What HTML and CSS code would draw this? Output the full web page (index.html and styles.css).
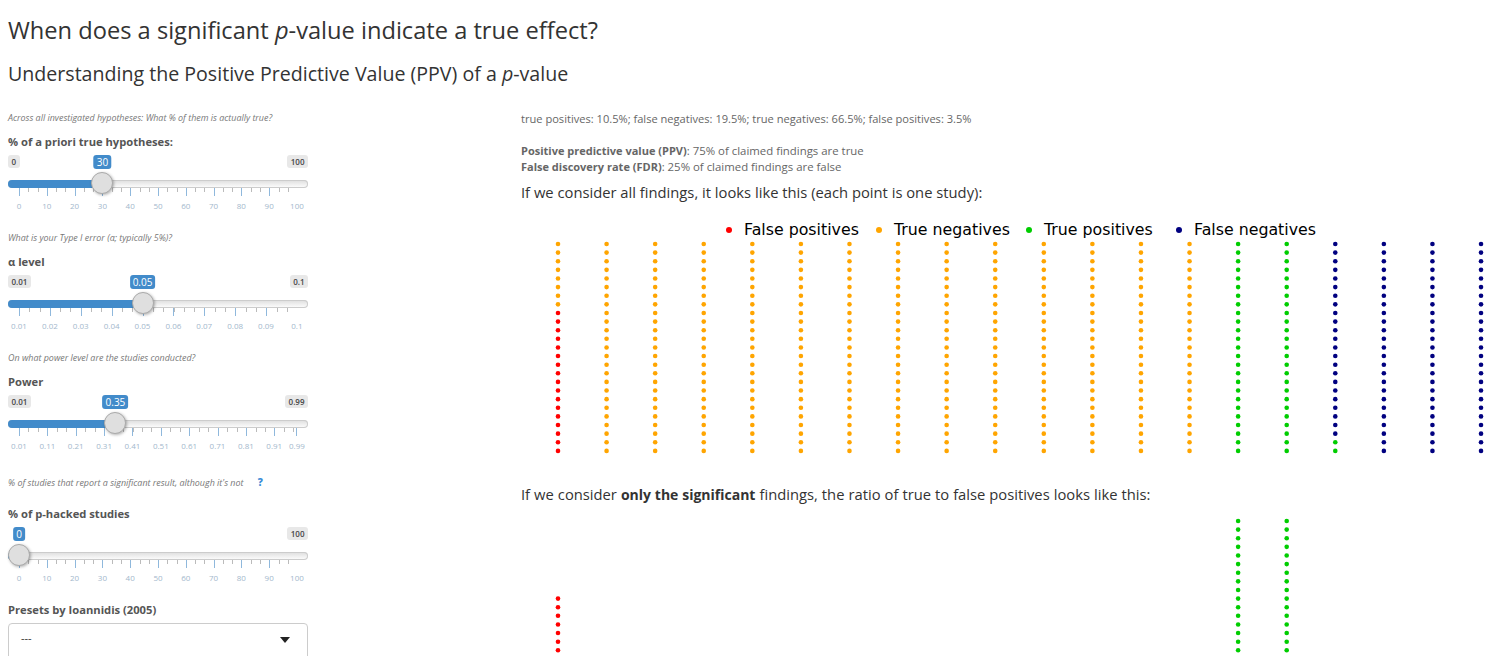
FILE: index.html
```html
<!DOCTYPE html>
<html>
	<head>
		<meta charset="UTF-8">
		<title>When does a significant p-value indicate a true effect?</title>
		<link rel="stylesheet" href="styles.css">
	</head>
	<body>
		<h2 class="title">When does a significant <em>p</em>-value indicate a true effect?</h2>
		<h3 class="subtitle">Understanding the Positive Predictive Value (PPV) of a <em>p</em>-value</h3>

		<div class="layout">
			<div class="sidebar">
				<p class="hint">Across all investigated hypotheses: What % of them is actually true?</p>
				<div class="field">
					<label>% of a priori true hypotheses:</label>
					<div class="slider" style="--v: .3">
						<div class="bubbles"><span class="bubble">0</span><span class="bubble">100</span><span class="bubble-value">30</span></div>
						<div class="track"><div class="fill"></div><div class="handle"></div></div>
						<div class="ticks ticks-pct"></div>
						<div class="grid"><span>0</span><span>10</span><span>20</span><span>30</span><span>40</span><span>50</span><span>60</span><span>70</span><span>80</span><span>90</span><span>100</span></div>
					</div>
				</div>

				<p class="hint">What is your Type I error (α; typically 5%)?</p>
				<div class="field">
					<label>α level</label>
					<div class="slider" style="--v: .4444">
						<div class="bubbles"><span class="bubble">0.01</span><span class="bubble">0.1</span><span class="bubble-value">0.05</span></div>
						<div class="track"><div class="fill"></div><div class="handle"></div></div>
						<div class="ticks ticks-alpha"></div>
						<div class="grid"><span>0.01</span><span>0.02</span><span>0.03</span><span>0.04</span><span>0.05</span><span>0.06</span><span>0.07</span><span>0.08</span><span>0.09</span><span>0.1</span></div>
					</div>
				</div>

				<p class="hint">On what power level are the studies conducted?</p>
				<div class="field">
					<label>Power</label>
					<div class="slider" style="--v: .3469">
						<div class="bubbles"><span class="bubble">0.01</span><span class="bubble">0.99</span><span class="bubble-value">0.35</span></div>
						<div class="track"><div class="fill"></div><div class="handle"></div></div>
						<div class="ticks ticks-power"></div>
						<div class="grid grid-power"><span>0.01</span><span>0.11</span><span>0.21</span><span>0.31</span><span>0.41</span><span>0.51</span><span>0.61</span><span>0.71</span><span>0.81</span><span>0.91</span><span>0.99</span></div>
					</div>
				</div>

				<p class="hint hint-help">% of studies that report a significant result, although it's not <span class="help">?</span></p>
				<div class="field field-hacked">
					<label>% of p-hacked studies</label>
					<div class="slider" style="--v: 0">
						<div class="bubbles"><span class="bubble bubble-hidden">0</span><span class="bubble">100</span><span class="bubble-value">0</span></div>
						<div class="track"><div class="fill"></div><div class="handle"></div></div>
						<div class="ticks ticks-pct"></div>
						<div class="grid"><span>0</span><span>10</span><span>20</span><span>30</span><span>40</span><span>50</span><span>60</span><span>70</span><span>80</span><span>90</span><span>100</span></div>
					</div>
				</div>

				<div class="field field-select">
					<label>Presets by Ioannidis (2005)</label>
					<div class="select"><span>---</span><i class="caret"></i></div>
				</div>
			</div>

			<div class="main">
				<p class="rates">true positives: 10.5%; false negatives: 19.5%; true negatives: 66.5%; false positives: 3.5%</p>
				<p class="summary"><b>Positive predictive value (PPV)</b>: 75% of claimed findings are true<br><b>False discovery rate (FDR)</b>: 25% of claimed findings are false</p>
				<p class="lead">If we consider all findings, it looks like this (each point is one study):</p>
				<ul class="legend">
					<li><i class="dot dot-fp"></i>False positives</li>
					<li><i class="dot dot-tn"></i>True negatives</li>
					<li><i class="dot dot-tp"></i>True positives</li>
					<li><i class="dot dot-fn"></i>False negatives</li>
				</ul>
				<svg id="plot-all" class="plot" width="977" height="218"></svg>
				<p class="lead lead-second">If we consider <b>only the significant</b> findings, the ratio of true to false positives looks like this:</p>
				<svg id="plot-sig" class="plot plot-sig" width="977" height="218"></svg>
			</div>
		</div>

		<script src="plot.js"></script>
	</body>
</html>
```

FILE: styles.css
```css
*{
	box-sizing: border-box;
}
html,body{
	height: 100%;
	overflow: hidden;
}
body{
	margin: 0;
	padding: 0 8px;
	font-family: "Open Sans", "Liberation Sans", sans-serif;
	font-size: 14px;
	color: #333;
	background: #fff;
}
.title{
	margin: 0;
	padding-top: 14px;
	font-size: 23.65px;
	line-height: 32px;
	font-weight: 400;
}
.subtitle{
	margin: 0;
	padding-top: 14px;
	font-size: 19.6px;
	line-height: 28px;
	font-weight: 400;
}
.layout{
	display: flex;
	margin-top: 23px;
}
.sidebar{
	width: 300px;
	flex: none;
	color: #555;
}
.main{
	margin-left: 213px;
	padding-top: 1px;
	width: 977px;
	flex: none;
}

/* left column */
.hint{
	margin: 0;
	height: 14px;
	font-size: 8.94px;
	line-height: 14px;
	font-style: italic;
	color: #777;
	white-space: nowrap;
}
.hint-help{
	margin-top: 4px;
}
.help{
	margin-left: 12px;
	font-style: normal;
	font-weight: 800;
	font-size: 10px;
	color: #3c8dd8;
}
.field{
	margin-top: 9px;
	height: 97px;
}
.field-hacked{
	margin-top: 17px;
}
.field-select{
	margin-top: -1px;
}
.field label{
	display: block;
	height: 16px;
	font-size: 11.2px;
	line-height: 16px;
	font-weight: 700;
}
.slider{
	--x: calc(11px + (100% - 22px) * var(--v));
	padding-top: 5px;
}
.bubbles{
	position: relative;
	display: flex;
	justify-content: space-between;
	height: 14px;
	margin-bottom: 11px;
}
.bubble{
	padding: 0 3.5px;
	height: 13px;
	font-size: 8px;
	line-height: 13px;
	font-weight: 600;
	color: #444;
	background: #e8e8e8;
	border-radius: 3px;
}
.bubble-hidden{
	visibility: hidden;
}
.bubble-value{
	position: absolute;
	top: 0;
	left: var(--x);
	padding: 0 3px;
	height: 14px;
	font-size: 10px;
	line-height: 14px;
	color: #fff;
	background: #428bca;
	border-radius: 3px;
	transform: translateX(-50%);
}
.track{
	position: relative;
	height: 8px;
	border-radius: 4px;
	background: linear-gradient(to bottom, #ddd, #fff);
	box-shadow: inset 0 0 0 1px #ccc;
}
.fill{
	height: 8px;
	width: var(--x);
	border-radius: 4px 0 0 4px;
	background: #428bca;
}
.handle{
	position: absolute;
	top: -8px;
	left: var(--x);
	width: 22px;
	height: 22px;
	border: 1px solid #aaa;
	border-radius: 50%;
	background: #dfdfdf;
	box-shadow: 1px 1px 3px rgba(0,0,0,.3);
	transform: translateX(-50%);
}
.ticks{
	margin: 0 11px;
	height: 8px;
	background-repeat: no-repeat;
	background-size: 100% 8px, 100% 4px;
}
.ticks-pct{
	background-image:
		repeating-linear-gradient(to right, #8fb8dc 0 1px, transparent 1px 27.8px),
		repeating-linear-gradient(to right, #bbb 0 1px, transparent 1px 9.27px);
}
.ticks-alpha{
	background-image:
		repeating-linear-gradient(to right, #8fb8dc 0 1px, transparent 1px 30.89px),
		repeating-linear-gradient(to right, #bbb 0 1px, transparent 1px 10.3px);
}
/* 0.99 is not a round step, last tick sits closer */
.ticks-power{
	background-image:
		linear-gradient(#8fb8dc, #8fb8dc),
		repeating-linear-gradient(to right, #8fb8dc 0 1px, transparent 1px 28.37px),
		repeating-linear-gradient(to right, #bbb 0 1px, transparent 1px 9.46px);
	background-size: 1px 8px, 100% 8px, 100% 4px;
	background-position: right top, left top, left top;
}
.grid{
	display: flex;
	justify-content: space-between;
	margin: 4px 11px 0;
	height: 12px;
	font-size: 8px;
	line-height: 12px;
	color: #a3b8cc;
}
.grid span{
	width: 0;
	display: flex;
	justify-content: center;
}
.grid-power{
	justify-content: flex-start;
	gap: 28.37px;
}
.grid-power span:last-child{
	margin-left: -5.73px;
}
.select{
	display: flex;
	align-items: flex-start;
	justify-content: space-between;
	margin-top: 5px;
	padding: 7px 17px 0 12px;
	height: 40px;
	font-size: 11px;
	line-height: 14px;
	color: #333;
	border: 1px solid #ccc;
	border-radius: 4px;
}
.caret{
	width: 0;
	height: 0;
	margin-top: 6px;
	border-top: 6px solid #222;
	border-left: 5px solid transparent;
	border-right: 5px solid transparent;
}

/* right column */
.rates{
	margin: 0;
	height: 14px;
	font-size: 11.1px;
	line-height: 14px;
	color: #666;
}
.summary{
	margin: 17px 0 0;
	font-size: 11.4px;
	line-height: 16px;
	color: #666;
}
.summary b{
	font-size: 11px;
}
.lead{
	margin: 7px 0 0;
	font-size: 14.75px;
	line-height: 20px;
	color: #333;
}
.lead b{
	font-size: 14px;
}
.lead-second{
	margin-top: 26px;
	word-spacing: .18px;
}
.legend{
	display: flex;
	margin: 18px 0 0;
	padding: 0 0 0 205px;
	list-style: none;
	font-family: "DejaVu Sans", sans-serif;
	font-size: 15.8px;
	line-height: 20px;
	color: #000;
	white-space: nowrap;
}
.legend li{
	display: flex;
	align-items: center;
	width: 150px;
}
.dot{
	width: 6px;
	height: 6px;
	margin-right: 12px;
	border-radius: 50%;
}
.dot-fp{
	background: #f00;
}
.dot-tn{
	background: #ffa500;
}
.dot-tp{
	background: #00cd00;
}
.dot-fn{
	background: #000080;
}
.plot{
	display: block;
}
.plot-sig{
	margin-top: 12px;
}
.fp{
	fill: #f00;
}
.tn{
	fill: #ffa500;
}
.tp{
	fill: #00cd00;
}
.fn{
	fill: #000080;
}
```

FILE: plot.js
```js
// each point is one study, columns fill from the bottom
var COLS = 20, ROWS = 25;
var X0 = 37, DX = 48.58, Y0 = 4, DY = 8.62;

function dot(svg, col, row, cls){
	var c = document.createElementNS('http://www.w3.org/2000/svg', 'circle');
	c.setAttribute('cx', X0 + col * DX);
	c.setAttribute('cy', Y0 + row * DY);
	c.setAttribute('r', 2.3);
	c.setAttribute('class', cls);
	svg.appendChild(c);
}

// all findings
var all = document.getElementById('plot-all');
for(var col = 0; col < COLS; col++){
	for(var row = 0; row < ROWS; row++){
		var cls = 'tn';
		if(col == 0 && row >= 8) cls = 'fp';
		if(col == 14 || col == 15) cls = 'tp';
		if(col >= 16) cls = 'fn';
		if(col == 16 && row >= 23) cls = 'tp';
		dot(all, col, row, cls);
	}
}

// only the significant ones
var sig = document.getElementById('plot-sig');
for(var row = 0; row < ROWS; row++){
	if(row >= 9) dot(sig, 0, row, 'fp');
	dot(sig, 14, row, 'tp');
	dot(sig, 15, row, 'tp');
}
```
